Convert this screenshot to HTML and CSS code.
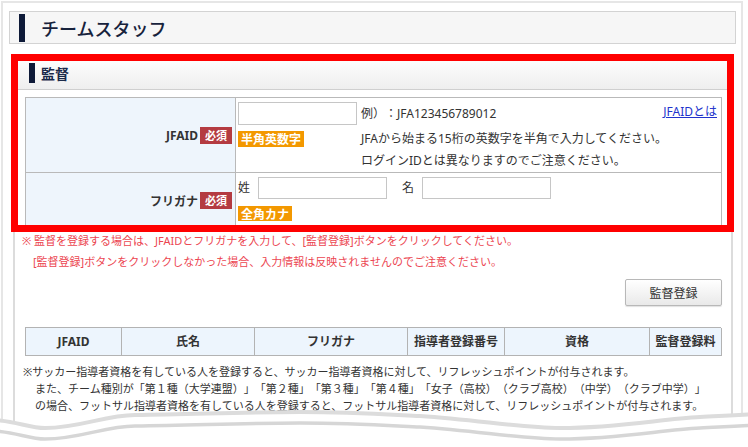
FILE: index.html
```html
<!DOCTYPE html>
<html lang="ja">
<head>
<meta charset="utf-8">
<title>チームスタッフ</title>
<link rel="stylesheet" href="styles.css">
</head>
<body>
<div class="frame">
  <div class="page-title"><span class="title-bar"></span><h1>チームスタッフ</h1></div>
  <section class="panel">
    <div class="panel-head"><span class="head-bar"></span><h2>監督</h2></div>
    <div class="panel-body">
      <div class="form">
        <div class="lbl-cell r1"><span class="lbl">JFAID</span><span class="req">必須</span></div>
        <div class="val-cell r1">
          <div class="idgrid">
            <input class="in-id" type="text">
            <span class="ex">例）：JFA123456789012</span>
            <a class="help" href="#">JFAIDとは</a>
            <span class="tag tag-b">半角英数字</span>
            <span class="desc">JFAから始まる15桁の英数字を半角で入力してください。</span>
            <span class="desc2">ログインIDとは異なりますのでご注意ください。</span>
          </div>
        </div>
        <div class="lbl-cell r2"><span class="lbl">フリガナ</span><span class="req">必須</span></div>
        <div class="val-cell r2">
          <div class="namerow">
            <span class="nm">姓</span><input class="in-name" type="text">
            <span class="nm mei">名</span><input class="in-name" type="text">
          </div>
          <span class="tag tag-k">全角カナ</span>
        </div>
      </div>
      <div class="notes-red">
        <p>※ 監督を登録する場合は、JFAIDとフリガナを入力して、[監督登録]ボタンをクリックしてください。</p>
        <p class="indent">[監督登録]ボタンをクリックしなかった場合、入力情報は反映されませんのでご注意ください。</p>
      </div>
      <div class="btn-row"><button class="btn" type="button">監督登録</button></div>
      <div class="list">
        <div class="lh c1">JFAID</div>
        <div class="lh c2">氏名</div>
        <div class="lh c3">フリガナ</div>
        <div class="lh c4">指導者登録番号</div>
        <div class="lh c5">資格</div>
        <div class="lh c6">監督登録料</div>
      </div>
      <div class="notes">
        <p>※サッカー指導者資格を有している人を登録すると、サッカー指導者資格に対して、リフレッシュポイントが付与されます。</p>
        <p class="indent">また、チーム種別が「第１種（大学連盟）」「第２種」「第３種」「第４種」「女子（高校）（クラブ高校）（中学）（クラブ中学）」</p>
        <p class="indent">の場合、フットサル指導者資格を有している人を登録すると、フットサル指導者資格に対して、リフレッシュポイントが付与されます。</p>
      </div>
    </div>
  </section>
</div>
<div class="highlight"></div>
<svg class="tear" viewBox="0 400 748 47" width="748" height="47">
  <path class="tear-fill" d="M-5,420 C15,421 30,428 45,428 C80,428 105,415 135,415 C200,414 250,412 300,412 C350,412 380,414 420,416 C480,420 520,428 560,428 C620,428 660,419 700,417 C720,416 735,415 760,414 L760,447 L-5,447 Z"/>
  <path class="tear-line" d="M-5,420 C15,421 30,428 45,428 C80,428 105,415 135,415 C200,414 250,412 300,412 C350,412 380,414 420,416 C480,420 520,428 560,428 C620,428 660,419 700,417 C720,416 735,415 760,414"/>
  <path class="tear-line2" d="M-5,431 C15,432 30,439 45,439 C80,439 105,426 135,426 C200,425 250,423 300,423 C350,423 380,425 420,427 C480,431 520,439 560,439 C620,439 660,430 700,428 C720,427 735,426 760,425"/>
</svg>
</body>
</html>
```
FILE: styles.css
```css
* { box-sizing: border-box; }
html, body { margin: 0; padding: 0; }
body {
  width: 748px;
  height: 447px;
  overflow: hidden;
  position: relative;
  background: #fff;
  font-family: "Noto Sans", "Noto Sans CJK JP", sans-serif;
  font-size: 12px;
  color: #333;
  text-spacing-trim: space-all;
}
p { margin: 0; }

.frame {
  margin: 1px 0 0 1px;
  width: 742px;
  height: 446px;
  overflow: hidden;
  border: 2px solid #e6e6e6;
  border-bottom: 0;
  padding: 8px 5px 0 6px;
}

.page-title {
  display: flex;
  align-items: center;
  height: 33px;
  border: 1px solid #d3d3d3;
  background: #f6f6f6;
  padding-left: 9px;
}
.title-bar {
  width: 6px;
  height: 28px;
  background: #0e1a38;
}
.page-title h1 {
  margin: 0 0 0 16px;
  font-family: "Noto Sans CJK JP", sans-serif;
  font-size: 18px;
  font-weight: 500;
  line-height: 1;
  color: #17223c;
}

.panel {
  margin: 11px 3px 0 4px;
  border: 2px solid #dcdcdc;
  border-bottom: 0;
  height: 392px;
}
.panel-head {
  display: flex;
  align-items: center;
  height: 33px;
  padding-left: 14px;
  background: linear-gradient(#ffffff, #eeeeee);
  border-bottom: 1px solid #cfcfcf;
}
.head-bar {
  width: 6px;
  height: 20px;
  background: #0e1a38;
}
.panel-head h2 {
  margin: 0 0 0 6px;
  font-family: "Noto Sans CJK JP", sans-serif;
  font-size: 14px;
  font-weight: bold;
  line-height: 1;
  color: #1b2a4a;
}
.panel-body {
  padding: 7px 9px 0 10px;
}

/* form grid */
.form {
  display: grid;
  grid-template-columns: 210px 1fr;
  grid-template-rows: 75px 56px;
  border-top: 1px solid #b9b9b9;
  border-left: 1px solid #b9b9b9;
}
.lbl-cell, .val-cell {
  border-right: 1px solid #b9b9b9;
  border-bottom: 1px solid #b9b9b9;
}
.lbl-cell {
  background: #eef5fc;
  display: flex;
  align-items: center;
  justify-content: flex-end;
  padding-right: 3px;
}
.lbl {
  font-weight: bold;
  font-size: 12px;
  color: #333;
}
.req {
  display: inline-block;
  margin-left: 2px;
  width: 32px;
  height: 17px;
  line-height: 17px;
  text-align: center;
  background: #b43b41;
  color: #fff;
  font-family: "Noto Sans CJK JP", sans-serif;
  font-size: 11px;
  font-weight: bold;
}
.val-cell {
  padding: 4px 4px 0 2px;
}
.idgrid {
  display: grid;
  grid-template-columns: 119px 1fr auto;
  grid-template-rows: 23px 24px 23px;
  column-gap: 4px;
}
input {
  margin: 0;
  border: 1px solid #c6c6c6;
  background: #fff;
  padding: 0 3px;
  font: inherit;
}
.in-id { width: 119px; height: 23px; }
.ex { line-height: 23px; }
.help {
  align-self: start;
  line-height: 20px;
  color: #2233cc;
  text-decoration: underline;
}
.tag {
  display: inline-block;
  background: #f39800;
  color: #fff;
  font-family: "Noto Sans CJK JP", sans-serif;
  font-size: 12px;
  font-weight: bold;
  line-height: 16px;
  padding: 0 3px;
}
.tag-b {
  justify-self: start;
  align-self: end;
  margin-bottom: 2px;
}
.desc {
  grid-column: 2 / 4;
  align-self: end;
  line-height: 20px;
}
.desc2 {
  grid-column: 2 / 4;
  line-height: 22px;
  padding-top: 1px;
}
.namerow {
  display: flex;
  align-items: center;
  height: 22px;
}
.nm { line-height: 22px; }
.in-name { width: 129px; height: 22px; margin-left: 8px; }
.mei { margin-left: 15px; }
.tag-k {
  margin-top: 7px;
  line-height: 15px;
}

/* notes */
.notes-red {
  margin: 1px 0 0 -3px;
  font-size: 11px;
  line-height: 21px;
  color: #ec4651;
  white-space: nowrap;
}
.notes-red .indent { padding-left: 11px; }

.btn-row {
  display: flex;
  justify-content: flex-end;
  margin-top: 7px;
}
.btn {
  width: 97px;
  height: 27px;
  border: 1px solid #b8b8b8;
  border-radius: 2px;
  background: linear-gradient(#ffffff, #e9e9e9);
  box-shadow: 0 1px 1px rgba(0,0,0,0.12);
  font-family: "Noto Sans CJK JP", sans-serif;
  font-size: 12px;
  color: #333;
  padding: 0;
}

.list {
  margin-top: 21px;
  display: grid;
  grid-template-columns: 96px 133px 153px 97px 145px 72px;
  border-top: 1px solid #b3b3b3;
  border-left: 1px solid #b3b3b3;
  width: 696px;
}
.lh {
  height: 28px;
  line-height: 27px;
  text-align: center;
  background: #edf5fd;
  border-right: 1px solid #b3b3b3;
  border-bottom: 1px solid #b3b3b3;
  font-weight: bold;
  font-size: 12px;
  color: #333;
}

.notes {
  margin: 7px 0 0 -2px;
  font-size: 11px;
  line-height: 17px;
  color: #333;
  white-space: nowrap;
}
.notes .indent { padding-left: 12px; }

/* overlays */
.highlight {
  position: absolute;
  left: 11px;
  top: 54px;
  width: 723px;
  height: 178px;
  border: 7px solid #ff0000;
}
.tear {
  position: absolute;
  left: 0;
  top: 400px;
  display: block;
}
.tear-fill { fill: #fff; stroke: none; }
.tear-line { fill: none; stroke: #dcdcdc; stroke-width: 4; }
.tear-line2 { fill: none; stroke: #d6d6d6; stroke-width: 3.5; }
```
